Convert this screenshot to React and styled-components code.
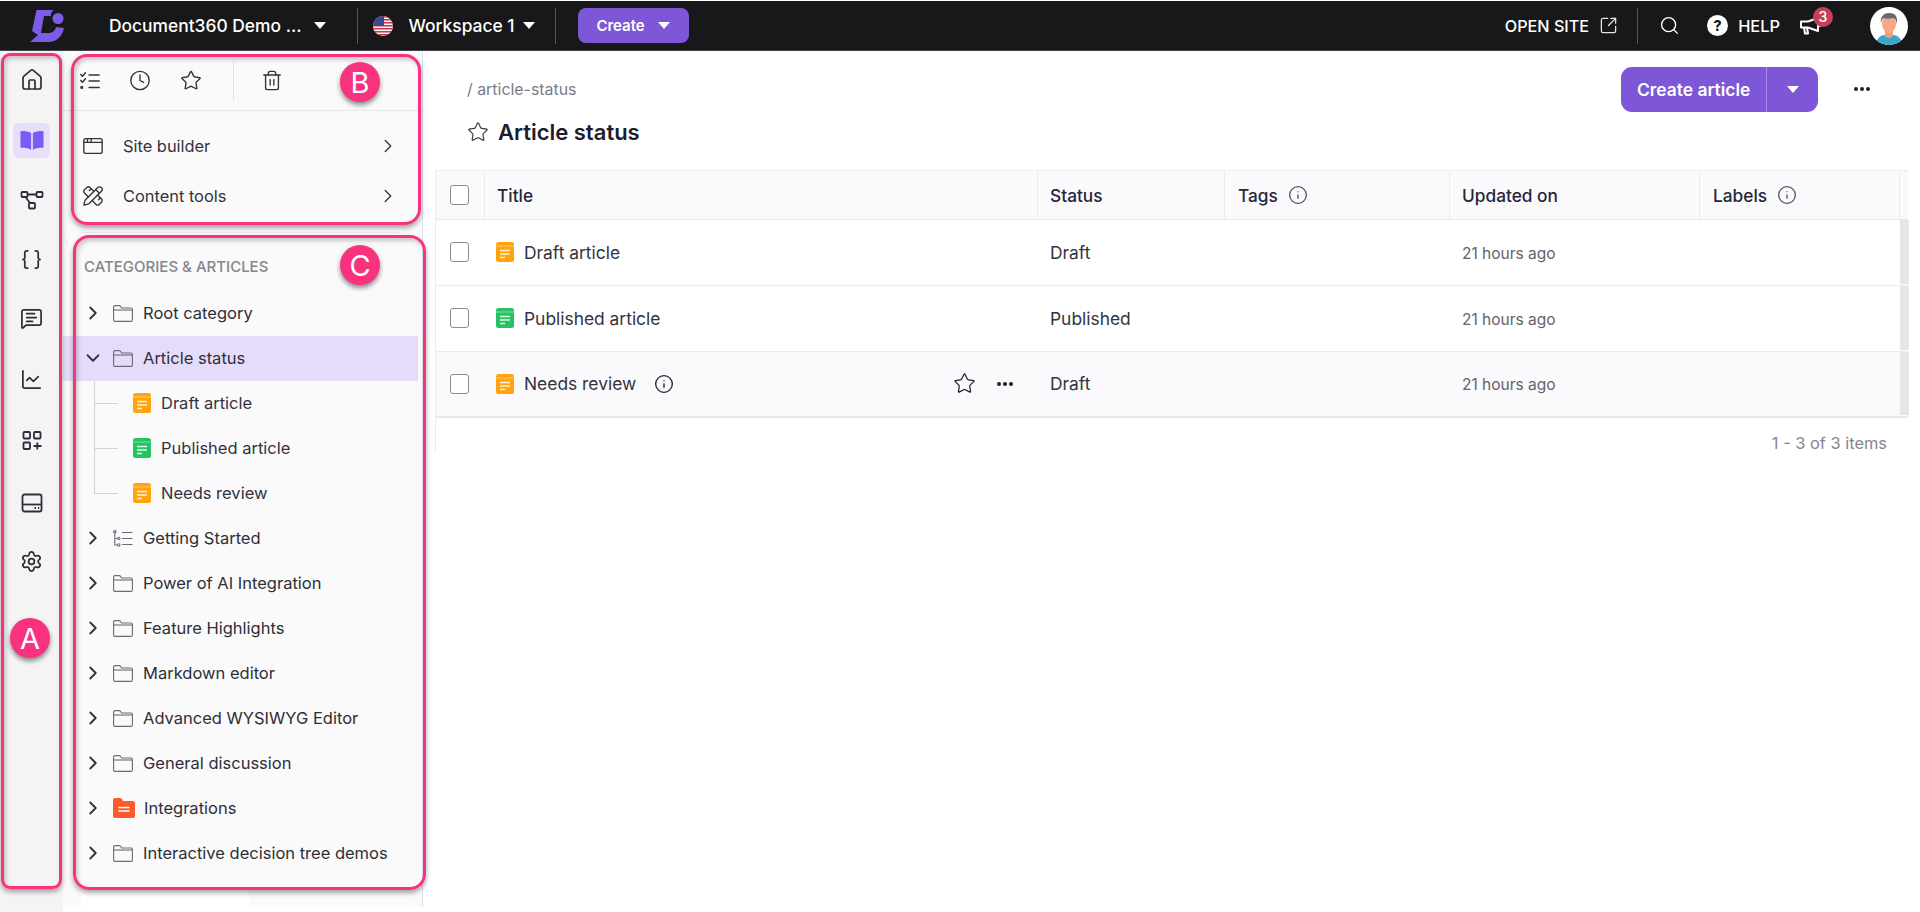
import React from "react";
import styled, { createGlobalStyle } from "styled-components";
import {
  House, Braces, MessageSquareText, ChartLine, Settings, Clock, Star, Trash2,
  AppWindow, PencilRuler, ChevronRight, ChevronDown, SquareArrowOutUpRight, Search, Info,
} from "lucide-react";

const Global = createGlobalStyle`
  html, body { margin: 0; padding: 0; background: #fff; }
  body { font-family: Inter, "Noto Sans", "Liberation Sans", sans-serif; color: #27272f; overflow: hidden; }
  * { box-sizing: border-box; }
`;

const Page = styled.div`
  position: relative;
  width: 1920px;
  height: 912px;
  padding-top: 1px;
  display: flex;
  flex-direction: column;
  overflow: hidden;
`;

/* ---- top bar ---- */
const TopBar = styled.header`
  height: 50px;
  flex: none;
  background: #18181b;
  border-bottom: 1px solid #44444a;
  display: flex;
  align-items: center;
  padding: 0 12px 0 29px;
  color: #fff;
`;
const TopText = styled.span`
  font-size: ${(p) => p.$size || 17.4}px;
  font-weight: 500;
  white-space: nowrap;
  margin-left: ${(p) => p.$ml || 0}px;
`;
const TopDivider = styled.span`
  width: 1px;
  height: 36px;
  background: #55555a;
  margin-left: ${(p) => p.$ml || 0}px;
`;
const Caret = styled.span`
  width: 0;
  height: 0;
  border-left: 6px solid transparent;
  border-right: 6px solid transparent;
  border-top: 7px solid #fff;
  margin-left: ${(p) => p.$ml || 0}px;
  flex: none;
`;
const CreateButton = styled.button`
  margin-left: 22px;
  width: 111px;
  height: 35px;
  border: 0;
  border-radius: 8px;
  background: #7e57d8;
  color: #fff;
  font: 600 15px Inter, sans-serif;
  display: flex;
  align-items: center;
  justify-content: center;
  gap: 13px;
`;
const TopRight = styled.div`
  margin-left: auto;
  display: flex;
  align-items: center;
`;
const IconSlot = styled.span`
  display: inline-flex;
  margin-left: ${(p) => p.$ml || 0}px;
  position: relative;
`;
const HelpDot = styled.span`
  margin-left: 27px;
  width: 21px;
  height: 21px;
  border-radius: 50%;
  background: #fff;
  color: #18181b;
  font-size: 14px;
  font-weight: 800;
  display: flex;
  align-items: center;
  justify-content: center;
`;
const NotifyBadge = styled.span`
  position: absolute;
  left: 13px;
  top: -10px;
  width: 20px;
  height: 20px;
  border-radius: 50%;
  background: #c5415a;
  color: #fff;
  font-size: 14px;
  font-weight: 500;
  display: flex;
  align-items: center;
  justify-content: center;
`;

/* ---- body ---- */
const Body = styled.div`
  flex: 1;
  display: flex;
  min-height: 0;
`;
const Rail = styled.nav`
  width: 63px;
  flex: none;
  background: #f4f4f4;
  display: flex;
  flex-direction: column;
  align-items: center;
  padding: 11px 0 0;
  color: #2e2e3a;
`;
const RailItem = styled.div`
  width: 37px;
  height: 35px;
  margin-top: ${(p) => p.$mt}px;
  border-radius: 6px;
  display: flex;
  align-items: center;
  justify-content: center;
  background: ${(p) => (p.$active ? "#e6dffb" : "transparent")};
`;

const Sidebar = styled.aside`
  width: 360px;
  flex: none;
  height: 856px;
  background: #fafafa;
  border-right: 1.5px solid #dde0ee;
  display: flex;
  flex-direction: column;
  position: relative;
`;
const QuickBar = styled.div`
  height: 60px;
  flex: none;
  border-bottom: 1px solid #e6e6e8;
  display: flex;
  align-items: center;
  padding-left: 16px;
  color: #33333f;
`;
const QuickIcon = styled.span`
  display: inline-flex;
  width: 22px;
  justify-content: center;
  margin-left: ${(p) => p.$ml || 0}px;
`;
const QuickDivider = styled.span`
  width: 1px;
  height: 40px;
  background: #e2e2e4;
  margin-left: 31px;
`;
const ToolGroup = styled.div`
  padding: 10px 0 11px;
  margin-right: 23px;
  margin-left: 18px;
  border-bottom: 1.5px solid #e6e6e8;
`;
const ToolRow = styled.div`
  height: 50px;
  display: flex;
  align-items: center;
  padding-left: 1px;
  font-size: 16.4px;
  color: #33333d;
`;
const ToolLabel = styled.span`
  margin-left: 19px;
  flex: 1;
`;
const SectionTitle = styled.div`
  height: 57.5px;
  padding: 9px 0 0 21px;
  display: flex;
  align-items: center;
  font-size: 15px;
  font-weight: 500;
  color: #85858f;
`;
const Tree = styled.div`
  margin-right: 4px;
`;
const TreeRow = styled.div`
  height: 45px;
  display: flex;
  align-items: center;
  padding-left: 23px;
  background: ${(p) => (p.$active ? "#e5dcfb" : "transparent")};
  font-size: 16.5px;
  color: #2f2f38;
  white-space: nowrap;
`;
const TreeIcon = styled.span`
  display: inline-flex;
  width: 20px;
  margin-right: ${(p) => (p.$wide ? 11 : 10)}px;
`;
const Chev = styled.span`
  display: inline-flex;
  width: 14px;
  justify-content: center;
  margin-right: 13px;
  color: #33333d;
  & > svg { flex: none; }
`;
const ChildRow = styled.div`
  height: 45px;
  display: flex;
  align-items: center;
  padding-left: 70px;
  font-size: 16.5px;
  color: #33333d;
  position: relative;
  &::before {
    content: "";
    position: absolute;
    left: 31px;
    top: 0;
    width: 24px;
    height: ${(p) => (p.$last ? "23px" : "100%")};
    border-left: 1.5px solid #d2d2d6;
  }
  &::after {
    content: "";
    position: absolute;
    left: 31px;
    top: 22px;
    width: 24px;
    border-top: 1.5px solid #d2d2d6;
  }
`;
const ChildText = styled.span`
  margin-left: 10px;
`;
const FooterStrip = styled.div`
  margin-top: auto;
  margin-left: 18px;
  width: 168px;
  height: 17px;
  background: #fff;
`;

/* ---- main ---- */
const Main = styled.main`
  flex: 1;
  min-width: 0;
  padding: 0 12px;
`;
const Head = styled.div`
  height: 119px;
  display: flex;
  justify-content: space-between;
  padding-left: 32px;
`;
const HeadLeft = styled.div`
  padding-top: 29px;
`;
const Crumb = styled.div`
  font-size: 15.9px;
  line-height: 20px;
  color: #7c7c86;
`;
const TitleLine = styled.div`
  margin-top: 17px;
  display: flex;
  align-items: center;
  gap: 9px;
  color: #3a3a48;
`;
const Title = styled.h1`
  margin: 0;
  font-size: 22px;
  line-height: 30px;
  font-weight: 600;
  color: #1c1c2b;
`;
const HeadRight = styled.div`
  display: flex;
  align-items: flex-start;
  padding: 16px 38px 0 0;
`;
const SplitButton = styled.div`
  width: 197px;
  height: 45px;
  border-radius: 11px;
  background: #7e57d8;
  color: #fff;
  display: flex;
  align-items: center;
  font-size: 17.4px;
  font-weight: 600;
`;
const SplitLabel = styled.span`
  width: 146px;
  height: 100%;
  border-right: 1px solid #a58ae6;
  display: flex;
  align-items: center;
  padding-left: 16px;
`;
const SplitCaret = styled.span`
  flex: 1;
  display: flex;
  justify-content: center;
`;
const Dots = styled.span`
  display: inline-flex;
  gap: 2px;
  margin-left: ${(p) => p.$ml || 0}px;
  margin-top: ${(p) => p.$mt || 0}px;
  & > i {
    width: 4px;
    height: 4px;
    border-radius: 50%;
    background: #1f1f2c;
  }
`;
const COLUMNS = "49px 553px 187px 225px 250px 200px 9px";
const TableWrap = styled.div`
  border-top: 1.5px solid #ececf0;
  border-left: 1.5px solid #ececf0;
`;
const HeaderRow = styled.div`
  display: grid;
  grid-template-columns: ${COLUMNS};
  height: 49px;
  background: #fafafc;
  border-bottom: 1.5px solid #e8e8ec;
  font-size: 17.3px;
  font-weight: 500;
  color: #26263a;
`;
const HeaderCell = styled.div`
  display: flex;
  align-items: center;
  gap: 10px;
  padding-left: ${(p) => p.$pl || 12}px;
  border-right: 1px solid #ececf0;
  color: #26263a;
`;
const CheckCell = styled.div`
  display: flex;
  align-items: center;
  justify-content: center;
  padding-right: 2px;
  border-right: ${(p) => (p.$header ? "1px solid #ececf0" : "0")};
`;
const Box = styled.span`
  width: 19px;
  height: 20px;
  border: 1.2px solid #8b8b92;
  border-radius: 3px;
  background: #fff;
`;
const DataRow = styled.div`
  display: grid;
  grid-template-columns: ${COLUMNS};
  height: 66px;
  padding-bottom: 1px;
  background: ${(p) => (p.$hover ? "#fafafc" : "#fff")};
  border-bottom: ${(p) => (p.$last ? "2px solid #e8e8ec" : "1px solid #ececf0")};
  font-size: 17.4px;
  color: #33333f;
`;
const Cell = styled.div`
  display: flex;
  align-items: center;
  padding-left: 12px;
`;
const TitleCell = styled(Cell)`
  padding-left: 11px;
  gap: 10px;
`;
const TimeCell = styled(Cell)`
  font-size: 15.5px;
  color: #62626c;
  padding-top: 2px;
`;
const RowActions = styled.span`
  margin-left: auto;
  margin-right: 25px;
  display: flex;
  align-items: center;
  gap: 21px;
  color: #1f1f2c;
`;
const InfoSlot = styled.span`
  display: inline-flex;
  margin-left: 8px;
  color: #1f1f2c;
`;
const ScrollTrack = styled.div`
  background: #e6e6e6;
`;
const Pager = styled.div`
  margin-top: 15px;
  padding-right: 21px;
  text-align: right;
  font-size: 16.4px;
  line-height: 20px;
  color: #85858d;
`;

/* ---- overlays: review annotations ---- */
const Outline = styled.div`
  position: absolute;
  border: 3px solid #f8327f;
  box-shadow: 0 3px 5px rgba(0, 0, 0, 0.35), inset 2px 3px 4px rgba(0, 0, 0, 0.2);
  pointer-events: none;
`;
const OutlineA = styled(Outline)`
  left: 1px; top: 53px; width: 61px; height: 836px; border-radius: 9px;
`;
const OutlineB = styled(Outline)`
  left: 71px; top: 54px; width: 350px; height: 171px; border-radius: 16px;
`;
const OutlineC = styled(Outline)`
  left: 73px; top: 235px; width: 353px; height: 655px; border-radius: 16px;
`;
const Marker = styled.div`
  position: absolute;
  width: 40px;
  height: 40px;
  border-radius: 50%;
  background: #f8327f;
  color: #fff;
  font-size: 29px;
  display: flex;
  align-items: center;
  justify-content: center;
  box-shadow: 0 3px 5px rgba(0, 0, 0, 0.45);
`;
const MarkerA = styled(Marker)`left: 10px; top: 618px;`;
const MarkerB = styled(Marker)`left: 340px; top: 62px;`;
const MarkerC = styled(Marker)`left: 340px; top: 245px;`;

/* ---- drawings ---- */
const Logo = () => (
  <svg width="40" height="38" viewBox="6 6 40 38" style={{ flex: "none", marginLeft: -2 }}>
    <path fill="#7c5be6" d="M15.5 9H33c-2.500 1.500-3.500 3.500-3 6h-7l-3 17h7c4 0 7-2 8-6l8 1c-1.500 8-7.500 14-15.500 14H9l8-7-6-4z" />
    <circle cx="37" cy="17.500" r="5.500" fill="#7c5be6" />
  </svg>
);
const Flag = () => (
  <svg width="20" height="20" viewBox="0 0 20 20" style={{ flex: "none" }}>
    <defs><clipPath id="flagc"><circle cx="10" cy="10" r="10" /></clipPath></defs>
    <g clipPath="url(#flagc)">
      <rect width="20" height="20" fill="#f3f3f3" />
      {[0, 3, 6, 9, 12, 15, 18].map((y) => <rect key={y} y={y} width="20" height="1.500" fill="#c8374a" />)}
      <rect width="11" height="10" fill="#3b4a86" />
    </g>
  </svg>
);
const Avatar = () => (
  <svg width="38" height="38" viewBox="0 0 38 38" style={{ display: "block" }}>
    <defs><clipPath id="avc"><circle cx="19" cy="19" r="19" /></clipPath></defs>
    <g clipPath="url(#avc)">
      <rect width="38" height="38" fill="#fff" />
      <path d="M6 38c0-7 5-10 9-10h8c4 0 9 3 9 10z" fill="#3aa7c8" />
      <path d="M15 22h8v7c-2 2.500-6 2.500-8 0z" fill="#f2a07c" />
      <ellipse cx="19" cy="17" rx="7" ry="9" fill="#f8a884" />
      <path d="M11 17c-1-7 2-11 8-11 6 0 9 3 8 11-1-4-2-6-4-6-3 1-7 1-9 0-2 1-3 3-3 6z" fill="#5f6d78" />
    </g>
  </svg>
);
const MegaphoneIcon = () => (
  <svg width="22" height="18" viewBox="0 0 22 18" fill="none" stroke="#fff" strokeWidth="2" strokeLinejoin="round">
    <path d="M1 4.500h7L18 1v13L8 10.500H1z" />
    <path d="M4 10.500l1 6h3l-1-6" />
    <path d="M18 5.500c2 0 3 1 3 2s-1 2-3 2" strokeWidth="1.500" />
  </svg>
);
const TasksIcon = () => (
  <svg width="24" height="24" viewBox="0 0 24 24" fill="none" stroke="currentColor" strokeWidth="1.600" strokeLinecap="round" strokeLinejoin="round">
    <path d="M2 5l1.800 1.800L7 3M2 11.500l1.800 1.800L7 9.500" />
    <circle cx="3" cy="19" r=".9" fill="currentColor" />
    <path d="M11 5.500h11M11 12h11M11 19h11" />
  </svg>
);
const BookIcon = () => (
  <svg width="26" height="21" viewBox="0 0 24 20" fill="#7c5cf6">
    <path d="M11.200 3C9 1.500 6 1 2 1c-.6 0-1 .4-1 1v14c0 .6.4 1 1 1 4 0 7 .5 9.200 2z" />
    <path d="M12.800 3C15 1.500 18 1 22 1c.6 0 1 .4 1 1v14c0 .6-.4 1-1 1-4 0-7 .5-9.200 2z" />
  </svg>
);
const GraphIcon = () => (
  <svg width="24" height="24" viewBox="0 0 24 24" fill="none" stroke="currentColor" strokeWidth="1.800" strokeLinejoin="round">
    <rect x="1.500" y="4" width="6" height="5" rx="1" />
    <rect x="16.500" y="4" width="6" height="5" rx="1" />
    <rect x="9" y="15" width="6" height="5.500" rx="1" />
    <path d="M7.500 6.500h9M5.500 9l4.500 6" />
  </svg>
);
const AppsIcon = () => (
  <svg width="24" height="24" viewBox="0 0 24 24" fill="none" stroke="currentColor" strokeWidth="1.800">
    <rect x="3.500" y="3" width="6.500" height="6.500" rx="1" />
    <rect x="14" y="3" width="6.500" height="6.500" rx="1" />
    <rect x="3.500" y="13.500" width="6.500" height="6.500" rx="1" />
    <path d="M13.500 17h8M17.300 13.500v7" />
  </svg>
);
const DrawerIcon = () => (
  <svg width="24" height="24" viewBox="0 0 24 24" fill="none" stroke="currentColor" strokeWidth="1.800">
    <rect x="2.500" y="3.500" width="19" height="17" rx="2" />
    <path d="M2.500 13.500h19" />
    <path d="M14.500 17h1.500M18 17h1.200" strokeWidth="1.800" />
  </svg>
);
const FolderIcon = () => (
  <svg width="20" height="17" viewBox="0 0 20 17" fill="none" stroke="#6b6b78" strokeWidth="1.100" strokeLinejoin="round">
    <path d="M.6 2c0-.8.6-1.400 1.400-1.400h4.200c.5 0 .9.2 1.200.6L8.600 3H18c.8 0 1.400.6 1.400 1.400V15c0 .8-.6 1.400-1.400 1.400H2c-.8 0-1.400-.6-1.400-1.400z" />
    <path d="M.6 5h18.800" />
  </svg>
);
const OutlineIcon = () => (
  <svg width="20" height="17" viewBox="0 0 20 17" fill="none" stroke="#6b6b78" strokeWidth="1.100">
    <circle cx="1.800" cy="1.800" r="1.200" />
    <circle cx="5.800" cy="8.500" r="1.200" />
    <circle cx="5.800" cy="15" r="1.200" />
    <path d="M1.800 3v12h3M1.800 8.500h3M9 2.500h10.500M9 8.500h10.500M9 14.500h10.500" />
  </svg>
);
const RedFolder = () => (
  <svg width="22" height="20" viewBox="0 0 22 20" style={{ flex: "none" }}>
    <path fill="#ff5a2c" d="M0 2c0-1 .8-2 2-2h5c1 0 1.500.6 2 1.300L10 3h10c1 0 2 1 2 2v13c0 1-1 2-2 2H2c-1 0-2-1-2-2z" />
    <path d="M5.500 9.500h11M5.500 13h11" stroke="#fff" strokeWidth="1.500" />
  </svg>
);
const DocIcon = ({ color }) => (
  <svg width="18" height="20" viewBox="0 0 18 20" style={{ flex: "none" }}>
    <rect width="18" height="20" rx="2.500" fill={color} />
    <path d="M0 4h18" stroke="#fff" strokeOpacity=".55" strokeWidth=".8" />
    <path d="M4 8.500h10M4 12h10M4 15.500h5" stroke="#fff" strokeOpacity=".85" strokeWidth="1.400" />
  </svg>
);
const InfoIcon = ({ size = 20, color = "#55555f" }) => <Info size={size} color={color} strokeWidth={1.600} />;

const railItems = [
  { mt: 0, icon: <House size={24} strokeWidth={1.700} /> },
  { mt: 26, icon: <BookIcon />, active: true },
  { mt: 24, icon: <GraphIcon /> },
  { mt: 25, icon: <Braces size={23} strokeWidth={1.800} /> },
  { mt: 24, icon: <MessageSquareText size={23} strokeWidth={1.800} /> },
  { mt: 26, icon: <ChartLine size={23} strokeWidth={1.800} /> },
  { mt: 26, icon: <AppsIcon /> },
  { mt: 27, icon: <DrawerIcon /> },
  { mt: 24, icon: <Settings size={23} strokeWidth={1.800} /> },
];

const before = [["Root category", <FolderIcon />]];
const after = [
  ["Getting Started", <OutlineIcon />],
  ["Power of AI Integration", <FolderIcon />],
  ["Feature Highlights", <FolderIcon />],
  ["Markdown editor", <FolderIcon />],
  ["Advanced WYSIWYG Editor", <FolderIcon />],
  ["General discussion", <FolderIcon />],
  ["Integrations", <RedFolder />, true],
  ["Interactive decision tree demos", <FolderIcon />],
];
const children = [
  ["Draft article", "#ffa40c"],
  ["Published article", "#25c463"],
  ["Needs review", "#ffa40c"],
];

const Row = ({ label, icon, wide }) => (
  <TreeRow>
    <Chev><ChevronRight size={22} strokeWidth={2} /></Chev>
    <TreeIcon $wide={wide}>{icon}</TreeIcon>
    {label}
  </TreeRow>
);
const DotRow = ({ ml, mt }) => <Dots $ml={ml} $mt={mt}><i /><i /><i /></Dots>;

export default function App() {
  return (
    <Page>
      <Global />
      <TopBar>
        <Logo />
        <TopText $ml={42}>Document360 Demo ...</TopText>
        <Caret $ml={12} />
        <TopDivider $ml={31} />
        <IconSlot $ml={15}><Flag /></IconSlot>
        <TopText $ml={16}>Workspace 1</TopText>
        <Caret $ml={8} />
        <TopDivider $ml={20} />
        <CreateButton>Create <Caret /></CreateButton>
        <TopRight>
          <TopText $size={16.200}>OPEN SITE</TopText>
          <IconSlot $ml={10}><SquareArrowOutUpRight size={19} strokeWidth={1.600} color="#e4e4e4" /></IconSlot>
          <TopDivider $ml={19} />
          <IconSlot $ml={21}><Search size={21} strokeWidth={1.500} /></IconSlot>
          <HelpDot>?</HelpDot>
          <TopText $size={16.400} $ml={10}>HELP</TopText>
          <IconSlot $ml={20}>
            <MegaphoneIcon />
            <NotifyBadge>3</NotifyBadge>
          </IconSlot>
          <IconSlot $ml={48}><Avatar /></IconSlot>
        </TopRight>
      </TopBar>

      <Body>
        <Rail>
          {railItems.map((r, i) => (
            <RailItem key={i} $mt={r.mt} $active={r.active}>{r.icon}</RailItem>
          ))}
        </Rail>

        <Sidebar>
          <QuickBar>
            <QuickIcon><TasksIcon /></QuickIcon>
            <QuickIcon $ml={28}><Clock size={23} strokeWidth={1.500} /></QuickIcon>
            <QuickIcon $ml={29}><Star size={23} strokeWidth={1.500} /></QuickIcon>
            <QuickDivider />
            <QuickIcon $ml={27}><Trash2 size={23} strokeWidth={1.500} /></QuickIcon>
          </QuickBar>
          <ToolGroup>
            <ToolRow>
              <AppWindow size={22} strokeWidth={1.500} />
              <ToolLabel>Site builder</ToolLabel>
              <ChevronRight size={22} strokeWidth={1.400} />
            </ToolRow>
            <ToolRow>
              <PencilRuler size={22} strokeWidth={1.500} />
              <ToolLabel>Content tools</ToolLabel>
              <ChevronRight size={22} strokeWidth={1.400} />
            </ToolRow>
          </ToolGroup>
          <SectionTitle>CATEGORIES &amp; ARTICLES</SectionTitle>
          <Tree>
            {before.map(([l, ic]) => <Row key={l} label={l} icon={ic} />)}
            <TreeRow $active>
              <Chev><ChevronDown size={22} strokeWidth={2} /></Chev>
              <TreeIcon><FolderIcon /></TreeIcon>
              Article status
            </TreeRow>
            {children.map(([l, c], i) => (
              <ChildRow key={l} $last={i === children.length - 1}>
                <DocIcon color={c} />
                <ChildText>{l}</ChildText>
              </ChildRow>
            ))}
            {after.map(([l, ic, w]) => <Row key={l} label={l} icon={ic} wide={w} />)}
          </Tree>
          <FooterStrip />
        </Sidebar>

        <Main>
          <Head>
            <HeadLeft>
              <Crumb>/ article-status</Crumb>
              <TitleLine>
                <Star size={22} strokeWidth={1.300} />
                <Title>Article status</Title>
              </TitleLine>
            </HeadLeft>
            <HeadRight>
              <SplitButton>
                <SplitLabel>Create article</SplitLabel>
                <SplitCaret><Caret /></SplitCaret>
              </SplitButton>
              <DotRow ml={36} mt={20} />
            </HeadRight>
          </Head>

          <TableWrap>
            <HeaderRow>
              <CheckCell $header><Box /></CheckCell>
              <HeaderCell>Title</HeaderCell>
              <HeaderCell>Status</HeaderCell>
              <HeaderCell $pl={13}>Tags <InfoIcon /></HeaderCell>
              <HeaderCell>Updated on</HeaderCell>
              <HeaderCell $pl={13}>Labels <InfoIcon /></HeaderCell>
              <span />
            </HeaderRow>
            {[
              ["Draft article", "#ffa40c", "Draft"],
              ["Published article", "#25c463", "Published"],
              ["Needs review", "#ffa40c", "Draft", true],
            ].map(([t, c, s, hover]) => (
              <DataRow key={t} $hover={hover} $last={hover}>
                <CheckCell><Box /></CheckCell>
                <TitleCell>
                  <DocIcon color={c} />
                  {t}
                  {hover && <InfoSlot><InfoIcon color="#1f1f2c" /></InfoSlot>}
                  {hover && (
                    <RowActions>
                      <Star size={23} strokeWidth={1.300} />
                      <DotRow />
                    </RowActions>
                  )}
                </TitleCell>
                <Cell>{s}</Cell>
                <Cell />
                <TimeCell>21 hours ago</TimeCell>
                <Cell />
                <ScrollTrack />
              </DataRow>
            ))}
            <Pager>1 - 3 of 3 items</Pager>
          </TableWrap>
        </Main>
      </Body>

      <OutlineA />
      <OutlineB />
      <OutlineC />
      <MarkerA>A</MarkerA>
      <MarkerB>B</MarkerB>
      <MarkerC>C</MarkerC>
    </Page>
  );
}
